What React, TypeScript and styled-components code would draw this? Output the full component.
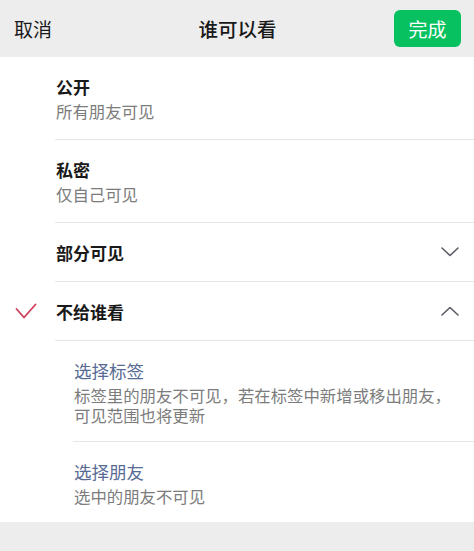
import React from "react";
import styled, { createGlobalStyle } from "styled-components";

const Global = createGlobalStyle`
  html, body { margin: 0; padding: 0; background: #ededed; }
  body { font-family: "Noto Sans CJK SC", "Noto Sans", sans-serif; -webkit-font-smoothing: antialiased; }
  * { box-sizing: border-box; }
`;

const Page = styled.div`
  width: 474px;
  height: 551px;
  background: #ededed;
  display: flex;
  flex-direction: column;
`;

const Header = styled.header`
  height: 57px;
  padding: 0 13px 0 14px;
  display: grid;
  grid-template-columns: 1fr auto 1fr;
  align-items: center;
  background: #ededed;
`;

const Cancel = styled.span`
  font-size: 19px;
  color: #191919;
  justify-self: start;
`;

const Title = styled.h1`
  margin: 0;
  font-size: 19.5px;
  font-weight: 500;
  color: #191919;
`;

const Done = styled.button`
  justify-self: end;
  width: 67px;
  height: 37px;
  border: none;
  border-radius: 6px;
  background: #07c160;
  color: #fff;
  font-family: inherit;
  font-size: 19px;
  padding: 0;
`;

const List = styled.div`
  background: #fff;
  display: flex;
  flex-direction: column;
`;

const Row = styled.div`
  display: flex;
  align-items: stretch;
`;

const Mark = styled.div`
  width: 55px;
  flex: none;
  display: flex;
  align-items: center;
  padding-left: 15px;
`;

const Body = styled.div<{ $h?: number; $indent?: number; $noLine?: boolean }>`
  flex: 1;
  margin-left: ${(p) => p.$indent ?? 0}px;
  min-height: ${(p) => p.$h ?? 0}px;
  padding: ${(p) => (p.$h ? "0 15px 0 1px" : "17px 15px 16px 1px")};
  border-bottom: ${(p) => (p.$noLine ? "none" : "1px solid #e6e6e6")};
  display: flex;
  align-items: center;
  justify-content: space-between;
`;

const Texts = styled.div`
  display: flex;
  flex-direction: column;
`;

const ItemTitle = styled.div`
  font-size: 17px;
  line-height: 25px;
  font-weight: 700;
  color: #191919;
`;

const SubTitle = styled.div`
  font-size: 17.5px;
  line-height: 25px;
  color: #576b95;
`;

const Desc = styled.div<{ $gap?: number }>`
  font-size: 16.4px;
  line-height: ${(p) => (p.$gap ? "20px" : "24px")};
  margin-top: ${(p) => p.$gap ?? 0}px;
  color: #7c7c7c;
`;

const Chevron = ({ up }: { up?: boolean }) => (
  <svg width="18" height="10" viewBox="0 0 18 10" fill="none">
    <polyline
      points={up ? "1,9 9,1.5 17,9" : "1,1 9,8.5 17,1"}
      stroke="#5b5b66"
      strokeWidth="1.6"
      strokeLinecap="round"
      strokeLinejoin="round"
    />
  </svg>
);

const Check = () => (
  <svg width="22" height="17" viewBox="0 0 22 17" fill="none">
    <polyline
      points="1.5,6 9,14.5 20.5,1.5"
      stroke="#cf3f58"
      strokeWidth="1.8"
      strokeLinecap="round"
      strokeLinejoin="round"
    />
  </svg>
);

export default function App() {
  return (
    <>
      <Global />
      <Page>
        <Header>
          <Cancel>取消</Cancel>
          <Title>谁可以看</Title>
          <Done>完成</Done>
        </Header>
        <List>
          <Row>
            <Mark />
            <Body>
              <Texts>
                <ItemTitle>公开</ItemTitle>
                <Desc>所有朋友可见</Desc>
              </Texts>
            </Body>
          </Row>
          <Row>
            <Mark />
            <Body>
              <Texts>
                <ItemTitle>私密</ItemTitle>
                <Desc>仅自己可见</Desc>
              </Texts>
            </Body>
          </Row>
          <Row>
            <Mark />
            <Body $h={59}>
              <ItemTitle>部分可见</ItemTitle>
              <Chevron />
            </Body>
          </Row>
          <Row>
            <Mark>
              <Check />
            </Mark>
            <Body $h={59}>
              <ItemTitle>不给谁看</ItemTitle>
              <Chevron up />
            </Body>
          </Row>
          <Row>
            <Mark />
            <Body $indent={18}>
              <Texts>
                <SubTitle>选择标签</SubTitle>
                <Desc $gap={2}>
                  标签里的朋友不可见，若在标签中新增或移出朋友，
                  <br />
                  可见范围也将更新
                </Desc>
              </Texts>
            </Body>
          </Row>
          <Row>
            <Mark />
            <Body $indent={18} $noLine>
              <Texts>
                <SubTitle>选择朋友</SubTitle>
                <Desc $gap={2}>选中的朋友不可见</Desc>
              </Texts>
            </Body>
          </Row>
        </List>
      </Page>
    </>
  );
}
